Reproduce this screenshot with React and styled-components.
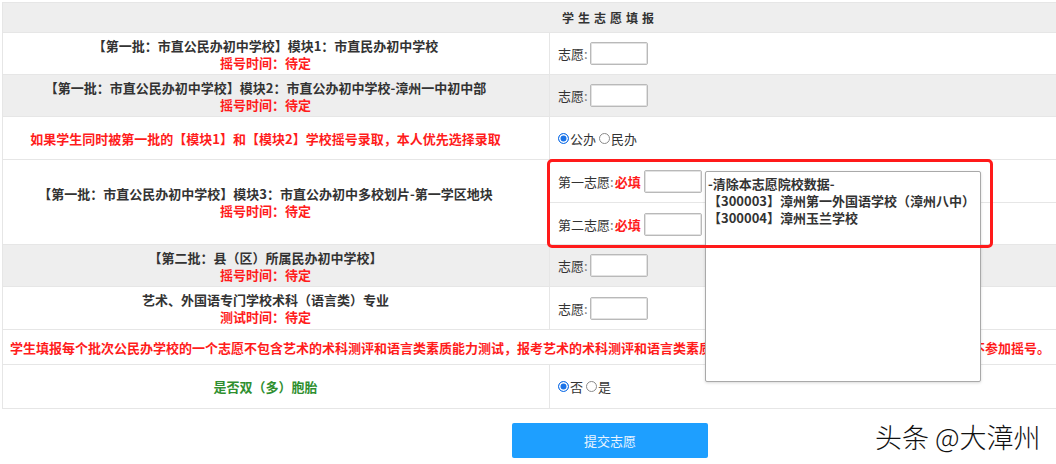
import React from "react"
import styled, { createGlobalStyle } from "styled-components"

const GlobalStyle = createGlobalStyle`
  html, body {
    margin: 0;
    padding: 0;
    background: #fff;
    overflow: hidden;
  }
  body {
    font-family: "Noto Sans CJK SC", "Noto Sans", sans-serif;
    font-size: 13px;
    color: #333;
  }
`

const Page = styled.div`
  position: relative;
  width: 1056px;
  height: 464px;
  padding: 2px 0 0 2px;
  box-sizing: border-box;
  overflow: hidden;
`

const Table = styled.div`
  width: 1216px;
  border: 1px solid #e6e6e6;
  box-sizing: border-box;
`

const Row = styled.div`
  position: relative;
  display: grid;
  grid-template-columns: 546px 1fr;
  height: ${(p) => p.h}px;
  box-sizing: border-box;
  border-bottom: ${(p) => (p.last ? "none" : "1px solid #e6e6e6")};
  background: ${(p) => (p.grey ? "#eeeeee" : "#fff")};
`

const HeaderRow = styled.div`
  height: 30px;
  box-sizing: border-box;
  border-bottom: 1px solid #e6e6e6;
  background: #eeeeee;
  display: flex;
  align-items: center;
  justify-content: center;
  font-size: 12px;
  font-weight: bold;
  letter-spacing: 4px;
  color: #333;
`

const LeftCell = styled.div`
  display: flex;
  flex-direction: column;
  align-items: center;
  justify-content: center;
  padding-right: 21px;
  font-weight: bold;
  line-height: 17px;
  color: ${(p) => p.color || "#333"};
`

const RightCell = styled.div`
  border-left: 1px solid #e6e6e6;
  display: flex;
  align-items: center;
  padding-left: 8px;
  color: #333;
`

const SplitCell = styled.div`
  border-left: 1px solid #e6e6e6;
  display: grid;
  grid-template-rows: 43px 1fr;
`

const SubRow = styled.div`
  display: flex;
  align-items: center;
  padding-left: 8px;
  border-bottom: ${(p) => (p.divider ? "1px solid #e6e6e6" : "none")};
  padding-top: ${(p) => (p.shift || 0)}px;
`

const WideCell = styled.div`
  grid-column: 1 / 3;
  display: flex;
  align-items: center;
  padding-left: 7px;
  white-space: nowrap;
  font-weight: bold;
  color: #ff1c1c;
`

const Red = styled.span`
  color: #ff1c1c;
  font-weight: bold;
`

const Label = styled.span`
  color: #333;
`

const Colon = styled.span`
  color: #777;
  margin-right: 1px;
`

const Box = styled.input`
  width: 58px;
  height: 23px;
  box-sizing: border-box;
  margin: 0 0 0 ${(p) => (p.gap || 1)}px;
  border: 1px solid #b9b9b9;
  border-radius: 2px;
  box-shadow: inset 0 0 0 1px #e2e2e2;
  background: #fff;
  outline: none;
`

const Radio = styled.input`
  appearance: none;
  width: 11px;
  height: 11px;
  margin: 0 1px 0 0;
  border-radius: 50%;
  box-sizing: border-box;
  border: 1px solid ${(p) => (p.defaultChecked ? "#1a73e8" : "#8a8a8a")};
  background: ${(p) => (p.defaultChecked ? "#1a73e8" : "#fff")};
  box-shadow: ${(p) => (p.defaultChecked ? "inset 0 0 0 1.5px #fff" : "none")};
  vertical-align: -1px;
`

const Choice = styled.label`
  display: inline-flex;
  align-items: center;
  margin-right: 3px;
  color: #333;
`

const ListBox = styled.div`
  position: absolute;
  left: 702px;
  top: 11px;
  width: 276px;
  height: 211px;
  box-sizing: border-box;
  background: #fff;
  border: 1px solid #a9a9a9;
  border-radius: 2px;
  box-shadow: 0 1px 3px rgba(0, 0, 0, 0.15);
  padding: 3px 2px;
  font-weight: bold;
  line-height: 17px;
  color: #333;
  z-index: 2;
`

const Option = styled.div`
  white-space: nowrap;
`

const Highlight = styled.div`
  position: absolute;
  left: 544px;
  top: -1px;
  width: 446px;
  height: 89px;
  box-sizing: border-box;
  border: 3px solid #ff1a1a;
  border-radius: 5px;
  z-index: 3;
  pointer-events: none;
`

const Footer = styled.div`
  width: 1216px;
  display: flex;
  justify-content: center;
  padding-top: 14px;
`

const Submit = styled.button`
  width: 196px;
  height: 35px;
  border: none;
  border-radius: 2px;
  background: #1e9fff;
  color: #e9f4ff;
  font-family: inherit;
  font-size: 13px;
`

const Watermark = styled.div`
  position: absolute;
  left: 875px;
  top: 417px;
  font-size: 27px;
  font-weight: 300;
  color: #111;
  text-shadow: 1px 1px 0 #fff, -1px -1px 0 #fff, 1px -1px 0 #fff, -1px 1px 0 #fff;
  white-space: nowrap;
`

const Wish = ({ text = "志愿" }) => (
  <>
    <Label>{text}</Label>
    <Colon>:</Colon>
    <Box type="text" />
  </>
)

const Required = ({ text }) => (
  <>
    <Label>{text}</Label>
    <Colon>:</Colon>
    <Red>必填</Red>
    <Box type="text" gap={3} />
  </>
)

const Batch = ({ title, time = "摇号时间：待定", grey, h }) => (
  <Row grey={grey} h={h}>
    <LeftCell>
      <div>{title}</div>
      <Red>{time}</Red>
    </LeftCell>
    <RightCell>
      <Wish />
    </RightCell>
  </Row>
)

export default function App() {
  return (
    <>
      <GlobalStyle />
      <Page>
        <Table>
          <HeaderRow>学生志愿填报</HeaderRow>
          <Batch h={42} title="【第一批：市直公民办初中学校】模块1：市直民办初中学校" />
          <Batch grey h={42} title="【第一批：市直公民办初中学校】模块2：市直公办初中学校-漳州一中初中部" />
          <Row h={43}>
            <LeftCell color="#ff1c1c">如果学生同时被第一批的【模块1】和【模块2】学校摇号录取，本人优先选择录取</LeftCell>
            <RightCell>
              <Choice>
                <Radio type="radio" name="prefer" defaultChecked />公办
              </Choice>
              <Choice>
                <Radio type="radio" name="prefer" />民办
              </Choice>
            </RightCell>
          </Row>
          <Row h={85}>
            <LeftCell>
              <div>【第一批：市直公民办初中学校】模块3：市直公办初中多校划片-第一学区地块</div>
              <Red>摇号时间：待定</Red>
            </LeftCell>
            <SplitCell>
              <SubRow divider>
                <Required text="第一志愿" />
              </SubRow>
              <SubRow shift={2}>
                <Required text="第二志愿" />
              </SubRow>
            </SplitCell>
            <ListBox role="listbox">
              <Option>-清除本志愿院校数据-</Option>
              <Option>【300003】漳州第一外国语学校（漳州八中）</Option>
              <Option>【300004】漳州玉兰学校</Option>
            </ListBox>
            <Highlight />
          </Row>
          <Batch grey h={42} title="【第二批：县（区）所属民办初中学校】" />
          <Batch h={43} title="艺术、外国语专门学校术科（语言类）专业" time="测试时间：待定" />
          <Row h={35}>
            <WideCell>
              学生填报每个批次公民办学校的一个志愿不包含艺术的术科测评和语言类素质能力测试，报考艺术的术科测评和语言类素质能力测试的学生，须在对应专业栏目中填报，不参加摇号。
            </WideCell>
          </Row>
          <Row h={43} last>
            <LeftCell color="#2f8f2f">是否双（多）胞胎</LeftCell>
            <RightCell>
              <Choice>
                <Radio type="radio" name="twins" defaultChecked />否
              </Choice>
              <Choice>
                <Radio type="radio" name="twins" />是
              </Choice>
            </RightCell>
          </Row>
        </Table>
        <Footer>
          <Submit type="button">提交志愿</Submit>
        </Footer>
        <Watermark>头条 @大漳州</Watermark>
      </Page>
    </>
  )
}
